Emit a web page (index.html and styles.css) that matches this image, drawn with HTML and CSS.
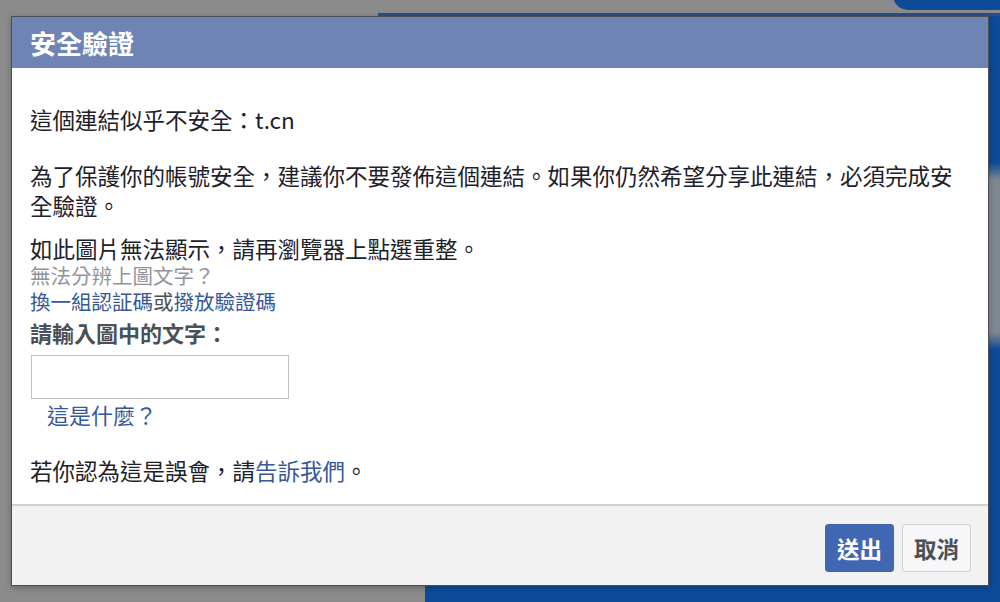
FILE: index.html
```html
<!DOCTYPE html>
<html lang="zh-Hant">
<head>
<meta charset="utf-8">
<title>安全驗證</title>
<link rel="stylesheet" href="styles.css">
</head>
<body>
<div class="page">
  <div class="bg-pill"></div>
  <div class="bg-bar"></div>
  <div class="bg-right"></div>
  <div class="bg-bottom"></div>
</div>
<div class="dialog">
  <div class="dialog-header">安全驗證</div>
  <div class="dialog-body">
    <p class="para">這個連結似乎不安全：t.cn</p>
    <p class="para para-2">為了保護你的帳號安全，建議你不要發佈這個連結。如果你仍然希望分享此連結，必須完成安全驗證。</p>
    <div class="captcha">
      <div class="captcha-note">如此圖片無法顯示，請再瀏覽器上點選重整。</div>
      <div class="captcha-help">無法分辨上圖文字？</div>
      <div class="captcha-links"><a class="link">換一組認証碼</a>或<a class="link">撥放驗證碼</a></div>
      <label class="captcha-label">請輸入圖中的文字：</label>
      <input class="captcha-input" type="text">
      <div class="captcha-what"><a class="link">這是什麼？</a></div>
    </div>
    <p class="para para-last">若你認為這是誤會，請<a class="link">告訴我們</a>。</p>
  </div>
  <div class="dialog-footer">
    <button class="btn btn-primary">送出</button>
    <button class="btn btn-cancel">取消</button>
  </div>
</div>
</body>
</html>
```

FILE: styles.css
```css
html, body {
  margin: 0;
  padding: 0;
}
body {
  width: 1000px;
  height: 602px;
  overflow: hidden;
  background: #8b8b8b;
  font-family: "Noto Sans CJK TC", "Noto Sans", sans-serif;
  position: relative;
}
.page {
  position: absolute;
  inset: 0;
}
.bg-pill {
  position: absolute;
  left: 893px;
  top: -20px;
  width: 140px;
  height: 30px;
  background: #0d4a98;
  border-radius: 16px;
}
.bg-bar {
  position: absolute;
  left: 378px;
  top: 13px;
  width: 622px;
  height: 4px;
  background: #2a4f86;
}
.bg-right {
  position: absolute;
  left: 988px;
  top: 16px;
  width: 12px;
  height: 586px;
  background: linear-gradient(180deg, #0d4a98 0%, #0d4a98 25%, #7f8790 28%, #7f8790 54%, #0d4a98 57%, #0d4a98 100%);
}
.bg-bottom {
  position: absolute;
  left: 425px;
  top: 586px;
  width: 575px;
  height: 16px;
  background: #0d4a98;
}
.dialog {
  position: absolute;
  left: 11px;
  top: 16px;
  width: 976px;
  height: 568px;
  border: 1px solid #4d4f55;
  background: #fff;
  display: flex;
  flex-direction: column;
  box-shadow: 0 2px 6px rgba(0,0,0,0.25);
}
.dialog-header {
  height: 51px;
  background: #6d84b4;
  color: #fff;
  font-size: 26px;
  font-weight: bold;
  line-height: 51px;
  padding-left: 18px;
}
.dialog-body {
  flex: 1;
  padding: 36px 18px 16px;
  color: #1d2129;
  font-size: 22.5px;
}
.para {
  margin: 0;
  line-height: 30px;
}
.para-2 {
  margin-top: 26px;
}
.captcha {
  margin-top: 14px;
  display: flex;
  flex-direction: column;
  align-items: flex-start;
}
.captcha-note {
  line-height: 28px;
}
.captcha-help {
  font-size: 20.5px;
  line-height: 26px;
  color: #90949c;
}
.captcha-links {
  font-size: 20.5px;
  line-height: 26px;
  color: #4b4f56;
}
.captcha-label {
  margin-top: 3px;
  font-size: 22px;
  font-weight: bold;
  line-height: 30px;
  color: #4b4f56;
}
.captcha-input {
  margin: 8px 0 0 1px;
  width: 258px;
  height: 44px;
  box-sizing: border-box;
  border: 1px solid #bdc1c9;
  padding: 0 6px;
  font-size: 20px;
}
.captcha-what {
  margin-left: 17px;
  line-height: 30px;
  font-size: 22px;
}
.para-last {
  margin-top: 26px;
}
.link {
  color: #365899;
  text-decoration: none;
  cursor: pointer;
}
.dialog-footer {
  flex: none;
  height: 81px;
  box-sizing: border-box;
  background: #f2f2f2;
  border-top: 2px solid #cfcfcf;
  display: flex;
  justify-content: flex-end;
  align-items: flex-start;
  gap: 8px;
  padding: 18px 17px 0 0;
}
.btn {
  height: 48px;
  padding: 0 11px;
  border-radius: 3px;
  font-family: inherit;
  font-size: 22.5px;
  font-weight: bold;
  line-height: 46px;
  box-sizing: border-box;
}
.btn-primary {
  background: #4267b2;
  border: 1px solid #4267b2;
  color: #fff;
}
.btn-cancel {
  background: #f6f7f9;
  border: 1px solid #ced0d4;
  color: #4b4f56;
}
```
